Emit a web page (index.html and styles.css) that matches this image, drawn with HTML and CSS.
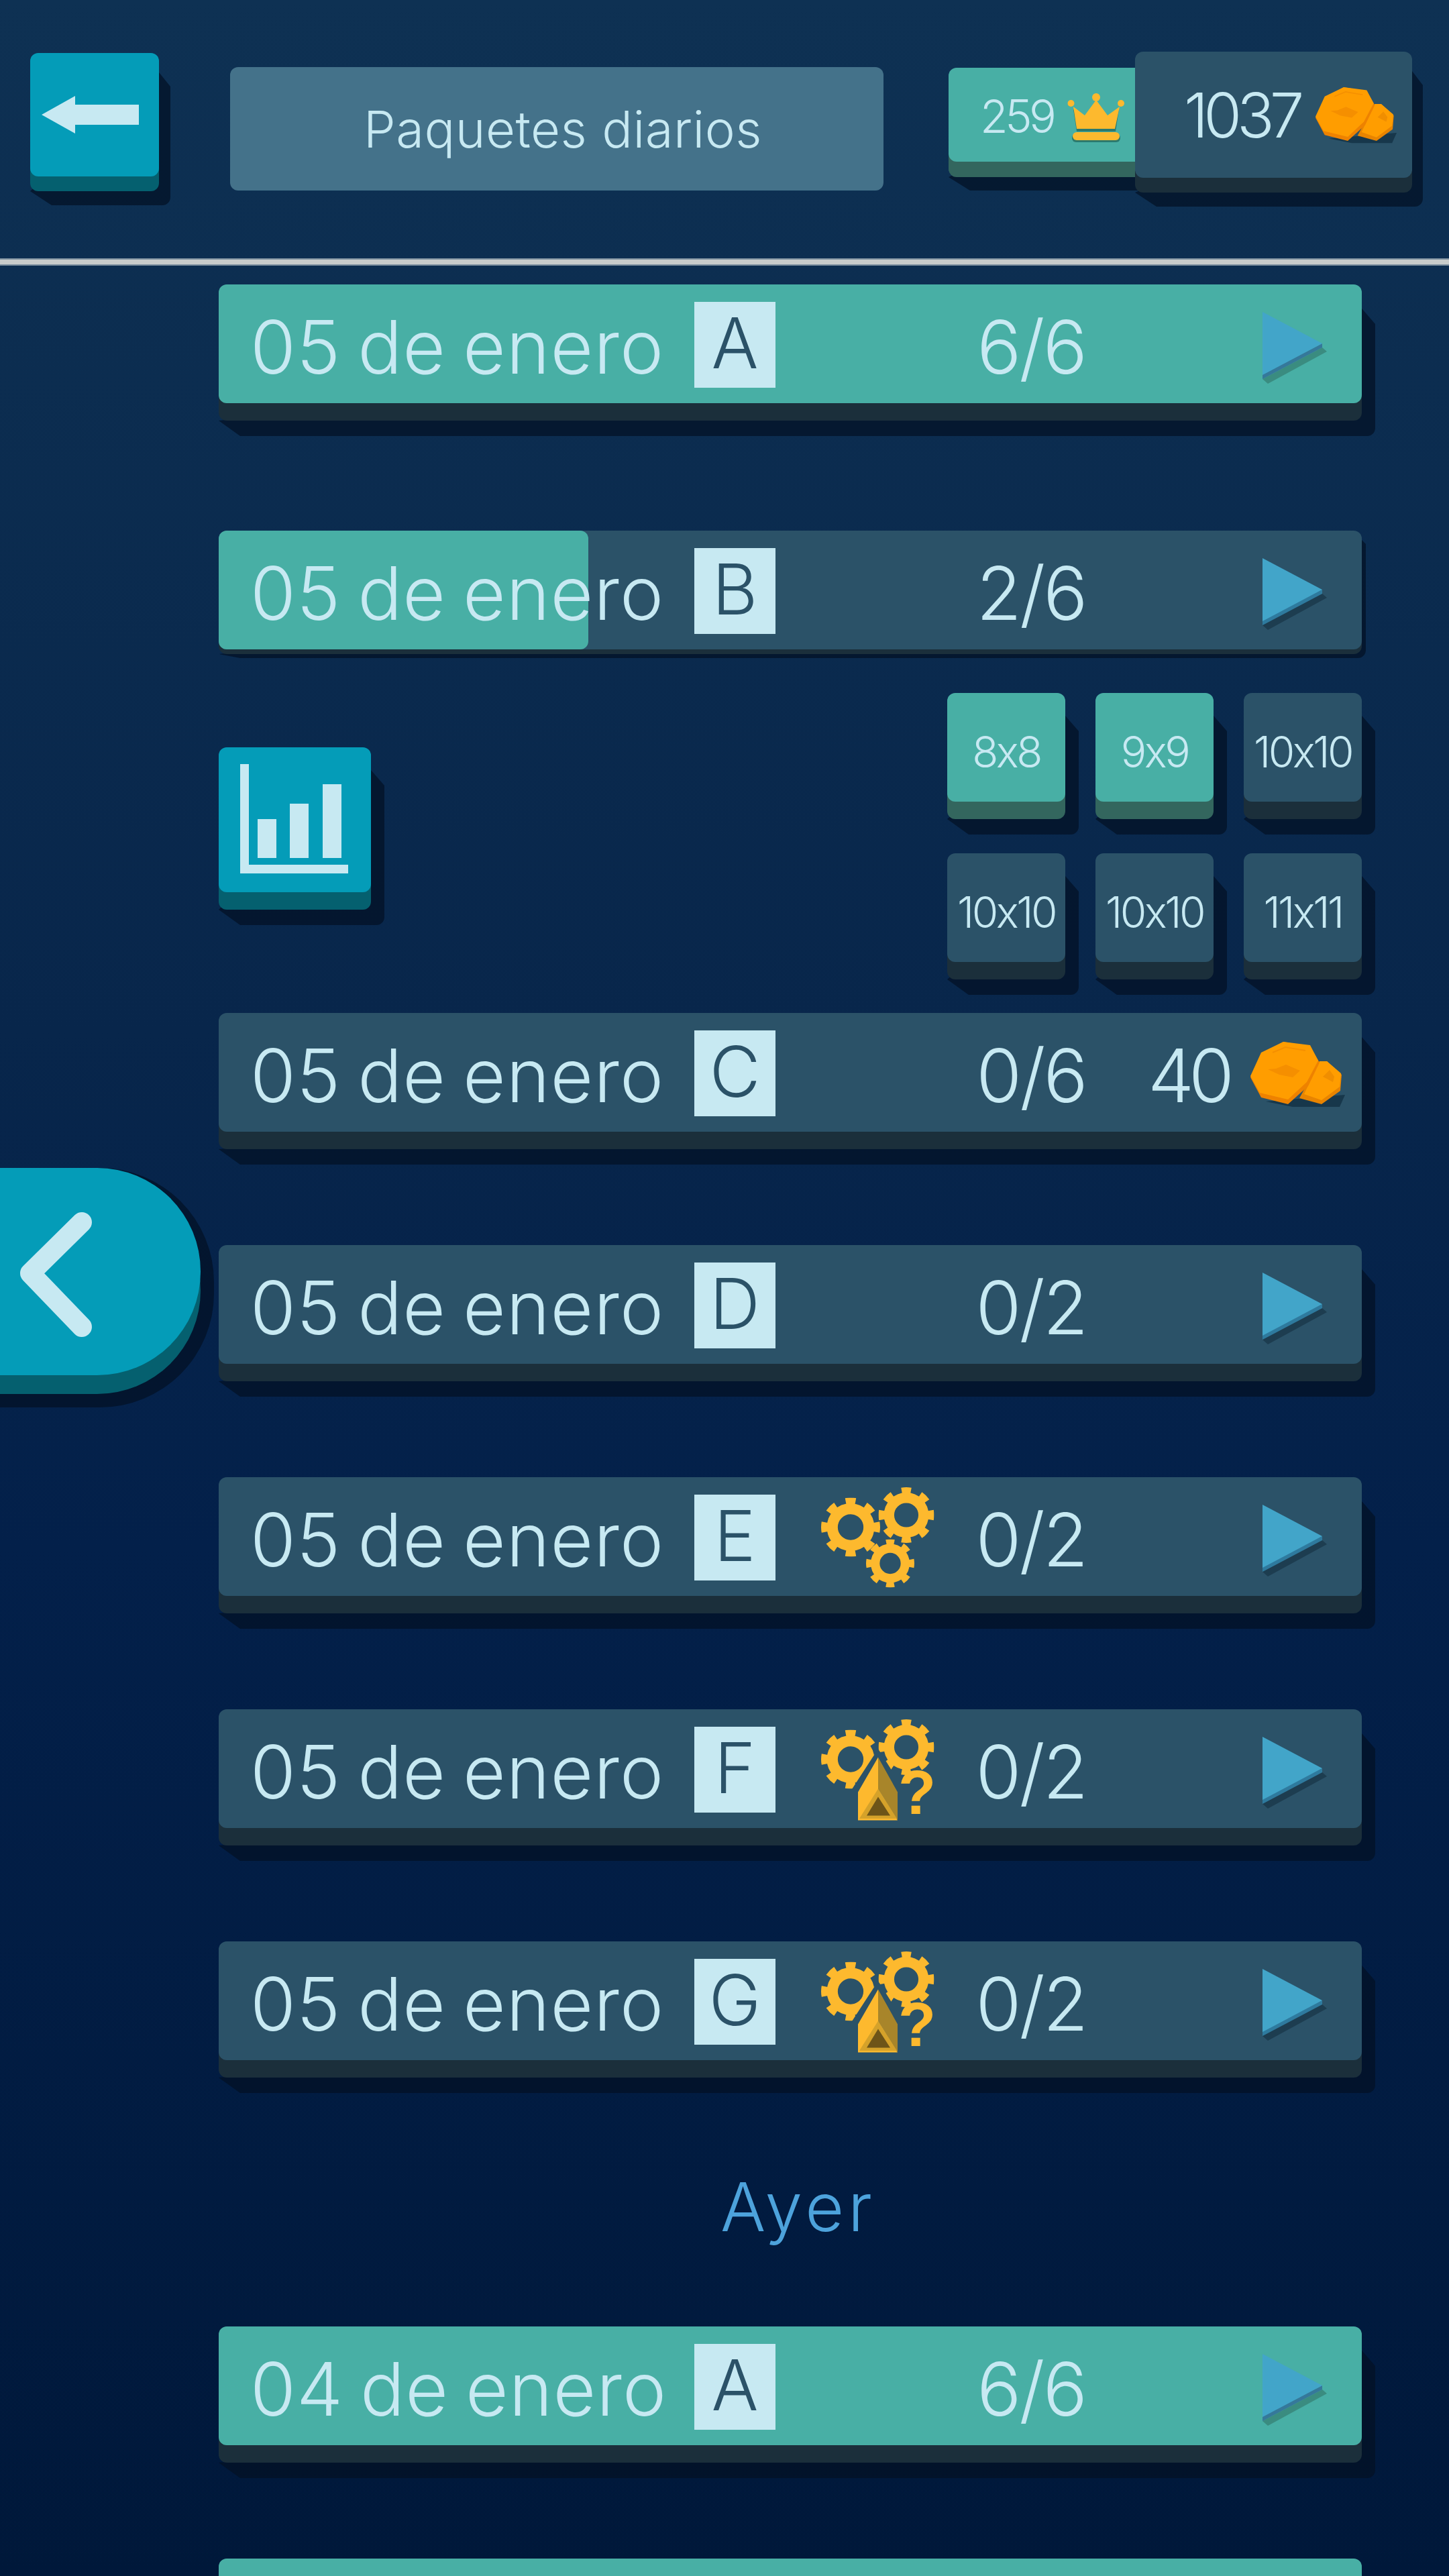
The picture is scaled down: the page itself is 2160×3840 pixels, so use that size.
FILE: index.html
```html
<!DOCTYPE html>
<html lang="es">
<head>
  <meta charset="UTF-8" />
  <title>Paquetes diarios</title>
  <link rel="stylesheet" href="styles.css">
</head>
<body>
  <!-- Shared icons -->
  <svg class="defs" width="0" height="0">
    <defs>
      <symbol id="gear" viewBox="0 0 100 100">
        <circle cx="50" cy="50" r="31" fill="none" stroke="currentColor" stroke-width="18.500" />
        <circle cx="50" cy="50" r="44" fill="none" stroke="currentColor" stroke-width="12" pathLength="80" stroke-dasharray="4.800 5.200" stroke-dashoffset="2.400" />
      </symbol>
      <symbol id="play" viewBox="0 0 123 110">
        <polygon class="play-cast" points="0,100 89,53 96,59 8,107" />
        <polygon class="play-side" points="0,93 89,47 89,53 0,100" />
        <polygon fill="#42a5c9" points="0,0 89,47 0,94" />
      </symbol>
      <symbol id="coins" viewBox="0 0 141 100">
        <polygon fill="#17374b" points="23,89 141,79 133,97 63,97" />
        <polygon fill="#e88400" points="103,29 114,29 136,49 134,73 106,93 73,84" />
        <polygon fill="#ff9d00" points="103,29 114,29 135,47 133,67 106,87 80,78" />
        <polygon fill="#f08e00" points="118,42 125,52 123,60 108,52" />
        <polygon fill="#ee8200" points="0,53 16,18 49,0 89,7 103,31 86,66 56,93 16,83" />
        <polygon fill="#ff9d00" points="0,51 16,16 49,0 89,5 101,28 84,60 56,86 14,76" />
        <polyline fill="none" stroke="#f59000" stroke-width="2" points="33,16 52,8 82,13" />
        <polygon fill="#f58f00" points="53,34 74,43 63,53 43,49 26,41 38,40" />
      </symbol>
      <symbol id="gears" viewBox="0 0 180 160">
        <use href="#gear" x="4" y="21.500" width="88" height="88" />
        <use href="#gear" x="89.500" y="6" width="83" height="83" />
        <use href="#gear" x="71" y="83.500" width="72" height="72" />
      </symbol>
      <symbol id="gears-arrow" viewBox="0 0 180 160">
        <use href="#gear" x="4" y="21.500" width="88" height="88" />
        <use href="#gear" x="89.500" y="6" width="83" height="83" />
        <polygon fill="#2b5268" points="89,50 127,110 127,160 50,160 50,110" />
        <polygon fill="#fdb92e" points="89,62.500 59,114.500 59,156.500 118,156.500 89,109.500" />
        <polygon fill="#a8852a" points="89,62.500 118,114.500 118,156.500 89,109.500" />
        <polygon fill="#d5a22a" points="89,109.500 117,154 61,154" />
        <polygon fill="#6d5418" points="89,121.500 107,149.500 72,149.500" />
        <text class="hint" x="147" y="146.500">?</text>
      </symbol>
    </defs>
  </svg>

  <!-- Top bar -->
  <header class="topbar">
    <button class="block cyan back-btn">
      <svg viewBox="0 0 192 184" width="192" height="184">
        <polygon fill="#c7e9f2" points="17,92 67,64 67,77 162,77 162,107 67,107 67,120" />
      </svg>
    </button>
    <div class="page-title">Paquetes diarios</div>
    <div class="block green crowns">
      <span class="crowns-num">259</span>
      <svg class="crown" viewBox="0 0 86 73" width="86" height="73">
        <rect x="7" y="60" width="72" height="13" rx="6" fill="#2c7a6e" />
        <polygon fill="#2c7a6e" points="9,24 14,57 72,57 77,24 60,37 43,14 26,37" />
        <polygon fill="#fdb92e" points="9,20 26,33 43,10 60,33 78,20 71,53 14,53" />
        <circle cx="5.500" cy="15" r="5" fill="#fdb92e" />
        <circle cx="43" cy="6" r="6" fill="#fdb92e" />
        <circle cx="80" cy="15" r="5" fill="#fdb92e" />
        <rect x="8" y="58" width="70" height="12" rx="6" fill="#fdb92e" />
      </svg>
    </div>
    <div class="block slate coins-tile">
      <span>1037</span>
      <svg class="coin-top"><use href="#coins" /></svg>
    </div>
  </header>
  <div class="divider"></div>

  <main class="list">
    <a class="block green row row-a">
      <span class="row-label">05 de enero</span>
      <span class="letter">A</span>
      <span class="row-icon"></span>
      <span class="row-count">6/6</span>
      <span class="row-end"><svg class="play on-green"><use href="#play" /></svg></span>
    </a>

    <a class="block slate row row-pressed">
      <span class="row-fill"></span>
      <span class="row-label">05 de enero</span>
      <span class="letter">B</span>
      <span class="row-icon"></span>
      <span class="row-count">2/6</span>
      <span class="row-end"><svg class="play"><use href="#play" /></svg></span>
    </a>

    <section class="options">
      <button class="block cyan stats-btn">
        <svg viewBox="0 0 227 216" width="227" height="216">
          <path fill="#c7e9f2" d="M32 25H45V175H193V188H32Z" />
          <rect x="58" y="107" width="28" height="58" fill="#c7e9f2" />
          <rect x="106" y="84" width="28" height="81" fill="#c7e9f2" />
          <rect x="155" y="55" width="28" height="110" fill="#c7e9f2" />
        </svg>
      </button>
      <div class="sizes">
        <div class="block green size">8x8</div>
        <div class="block green size">9x9</div>
        <div class="block slate size">10x10</div>
        <div class="block slate size">10x10</div>
        <div class="block slate size">10x10</div>
        <div class="block slate size">11x11</div>
      </div>
    </section>

    <a class="block slate row">
      <span class="row-label">05 de enero</span>
      <span class="letter">C</span>
      <span class="row-icon"></span>
      <span class="row-count">0/6</span>
      <span class="row-end"><span class="reward">40</span><svg class="coin-row"><use href="#coins" /></svg></span>
    </a>

    <a class="block slate row">
      <span class="row-label">05 de enero</span>
      <span class="letter">D</span>
      <span class="row-icon"></span>
      <span class="row-count">0/2</span>
      <span class="row-end"><svg class="play"><use href="#play" /></svg></span>
    </a>

    <a class="block slate row">
      <span class="row-label">05 de enero</span>
      <span class="letter">E</span>
      <svg class="row-icon"><use href="#gears" /></svg>
      <span class="row-count">0/2</span>
      <span class="row-end"><svg class="play"><use href="#play" /></svg></span>
    </a>

    <a class="block slate row">
      <span class="row-label">05 de enero</span>
      <span class="letter">F</span>
      <svg class="row-icon"><use href="#gears-arrow" /></svg>
      <span class="row-count">0/2</span>
      <span class="row-end"><svg class="play"><use href="#play" /></svg></span>
    </a>

    <a class="block slate row">
      <span class="row-label">05 de enero</span>
      <span class="letter">G</span>
      <svg class="row-icon"><use href="#gears-arrow" /></svg>
      <span class="row-count">0/2</span>
      <span class="row-end"><svg class="play"><use href="#play" /></svg></span>
    </a>

    <h2 class="day-title">Ayer</h2>

    <a class="block green row">
      <span class="row-label">04 de enero</span>
      <span class="letter">A</span>
      <span class="row-icon"></span>
      <span class="row-count">6/6</span>
      <span class="row-end"><svg class="play on-green"><use href="#play" /></svg></span>
    </a>

    <a class="block green row"></a>
  </main>

  <!-- Side tab sits over the list -->
  <button class="block cyan side-tab">
    <svg viewBox="0 0 299 309" width="299" height="309">
      <polyline points="122,81 45,157 122,237" fill="none" stroke="#c7e9f2" stroke-width="30" stroke-linecap="round" stroke-linejoin="round" />
    </svg>
  </button>
</body>
</html>
```

FILE: styles.css
```css
html {
  height: 100%;
}

body {
  margin: 0;
  width: 2160px;
  height: 3840px;
  overflow: hidden;
  background: linear-gradient(180deg, #0e3153 0%, #08264b 40%, #03204a 60%, #00183a 100%);
  font-family: Inter, Lato, sans-serif;
  font-weight: 300;
  color: #c7e9f2;
}

.defs {
  position: absolute;
}

/* Extruded block: face + side (box-shadow) + cast shadow (::before) */
.block {
  --side-h: 26px;
  --cast-x: 20px;
  --cast-y: 23px;
  --cast-top: 36px;
  --side: #1b2f3b;
  position: relative;
  display: block;
  box-sizing: border-box;
  padding: 0;
  border: none;
  border-radius: 12px;
  font: inherit;
  color: inherit;
  box-shadow: 0 var(--side-h) 0 var(--side);
}

.block::before {
  content: "";
  position: absolute;
  z-index: -1;
  top: 0;
  left: 0;
  right: calc(var(--cast-x) * -1);
  bottom: calc((var(--side-h) + var(--cast-y)) * -1);
  border-radius: 12px;
  background: rgba(3, 16, 36, 0.72);
  clip-path: polygon(calc(100% - var(--cast-x)) var(--cast-top), 100% calc(var(--cast-top) + var(--cast-y)), 100% 100%, 32px 100%, 0 calc(100% - var(--cast-y)));
}

.green {
  background: #48afa5;
  --side: #33665e;
}

.slate {
  background: #2b5268;
}

.cyan {
  background: #049cb8;
  --side: #05606f;
}

/* Top bar */
.topbar {
  display: flex;
  align-items: flex-start;
  height: 385px;
}

.back-btn {
  width: 192px;
  height: 184px;
  margin: 79px 0 0 45px;
  --side-h: 22px;
  --cast-x: 17px;
  --cast-y: 21px;
  --cast-top: 29px;
}

.back-btn svg,
.stats-btn svg,
.side-tab svg {
  display: block;
}

.page-title {
  box-sizing: border-box;
  width: 974px;
  height: 184px;
  margin: 100px 0 0 106px;
  padding-left: 18px;
  display: flex;
  align-items: center;
  justify-content: center;
  border-radius: 12px;
  background: #44728a;
  font-size: 76px;
  letter-spacing: 0.500px;
}

.crowns {
  width: 279px;
  height: 140px;
  margin: 101px 0 0 97px;
  padding-left: 47px;
  display: flex;
  align-items: center;
  gap: 21px;
  font-size: 68px;
  letter-spacing: -4.500px;
  border-radius: 12px 0 0 12px;
  --side-h: 23px;
  --cast-y: 20px;
}

.crowns-num {
  margin-top: 4px;
}

.crown {
  margin-top: 8px;
}

.coins-tile {
  width: 413px;
  height: 188px;
  margin: 77px 0 0 -1px;
  padding-left: 73px;
  display: flex;
  align-items: center;
  gap: 24px;
  font-size: 92px;
  letter-spacing: -7px;
  --side-h: 22px;
  --cast-x: 16px;
  --cast-y: 21px;
  --cast-top: 29px;
}

.coin-top {
  flex: none;
  width: 121px;
  height: 86px;
  margin-top: 4px;
}

.divider {
  height: 7px;
  border-top: 2px solid #7d909f;
  border-bottom: 2px solid #7d909f;
  background: #c8cccb;
}

/* Rows */
.list {
  display: flex;
  flex-direction: column;
  align-items: flex-start;
  padding: 28px 0 0 326px;
}

.row {
  flex: none;
  width: 1704px;
  height: 177px;
  margin-bottom: 169px;
  padding-left: 47px;
  --side: #1b2f3b;
  display: grid;
  grid-template-columns: 662px 121px 244px 274px 1fr;
  align-items: center;
  font-size: 110px;
  text-decoration: none;
}

.row-a {
  margin-bottom: 190px;
}

.row-pressed {
  --side-h: 7px;
  --cast-x: 6px;
  --cast-y: 6px;
  --cast-top: 14px;
  margin-bottom: 65px;
}

.row-fill {
  position: absolute;
  left: 0;
  top: 0;
  bottom: 0;
  width: 551px;
  border-radius: 12px;
  background: #48afa5;
}

.row-label,
.row-count,
.letter {
  position: relative;
}

.row-label {
  padding-top: 8px;
  letter-spacing: 1px;
  word-spacing: -7px;
}

.letter {
  align-self: start;
  box-sizing: border-box;
  height: 128px;
  margin-top: 26px;
  padding-bottom: 6px;
  display: flex;
  align-items: center;
  justify-content: center;
  background: #c7e9f2;
  color: #2b5268;
  font-size: 104px;
}

.row-icon {
  display: block;
  justify-self: end;
  width: 180px;
  height: 160px;
  color: #fdb92e;
}

.hint {
  fill: #fdb92e;
  font-family: "Liberation Sans", sans-serif;
  font-size: 92px;
  font-weight: 700;
  text-anchor: middle;
}

.row-count {
  padding-top: 8px;
  text-align: center;
  letter-spacing: -3px;
}

.row-end {
  display: flex;
  align-items: center;
  justify-content: flex-end;
  gap: 32px;
  padding-right: 25px;
}

.reward {
  padding-top: 8px;
  letter-spacing: -8px;
}

.play {
  --play-side: #2e7a9e;
  --play-cast: #1d3d50;
  width: 123px;
  height: 110px;
  margin-top: 15px;
}

.on-green {
  --play-side: #35789a;
  --play-cast: #3a8c80;
}

.play-side {
  fill: var(--play-side);
}

.play-cast {
  fill: var(--play-cast);
}

.coin-row {
  flex: none;
  width: 141px;
  height: 100px;
  margin-top: 8px;
}

/* Stats + board sizes */
.options {
  width: 1704px;
  height: 401px;
  margin-bottom: 76px;
  display: flex;
  justify-content: space-between;
}

.stats-btn {
  width: 227px;
  height: 216px;
  margin-top: 81px;
  --side-h: 26px;
  --cast-y: 23px;
  --cast-top: 34px;
}

.sizes {
  display: grid;
  grid-template-columns: repeat(3, 176px);
  grid-auto-rows: 162px;
  column-gap: 45px;
  row-gap: 77px;
}

.size {
  padding-top: 12px;
  display: flex;
  align-items: center;
  justify-content: center;
  font-size: 64px;
  letter-spacing: -3.500px;
  --cast-top: 34px;
}

.day-title {
  box-sizing: border-box;
  width: 1704px;
  height: 229px;
  margin: -1px 0 0;
  padding-left: 24px;
  text-align: center;
  color: #4da3dc;
  font-size: 100px;
  font-weight: 300;
  letter-spacing: 6px;
  line-height: 102px;
}

/* Side tab */
.side-tab {
  position: absolute;
  left: 0;
  top: 1741px;
  width: 299px;
  height: 309px;
  border-radius: 0 154px 154px 0;
  --side-h: 28px;
  --cast-y: 20px;
}

.side-tab::before {
  border-radius: 0 170px 170px 0;
  clip-path: none;
}
```
